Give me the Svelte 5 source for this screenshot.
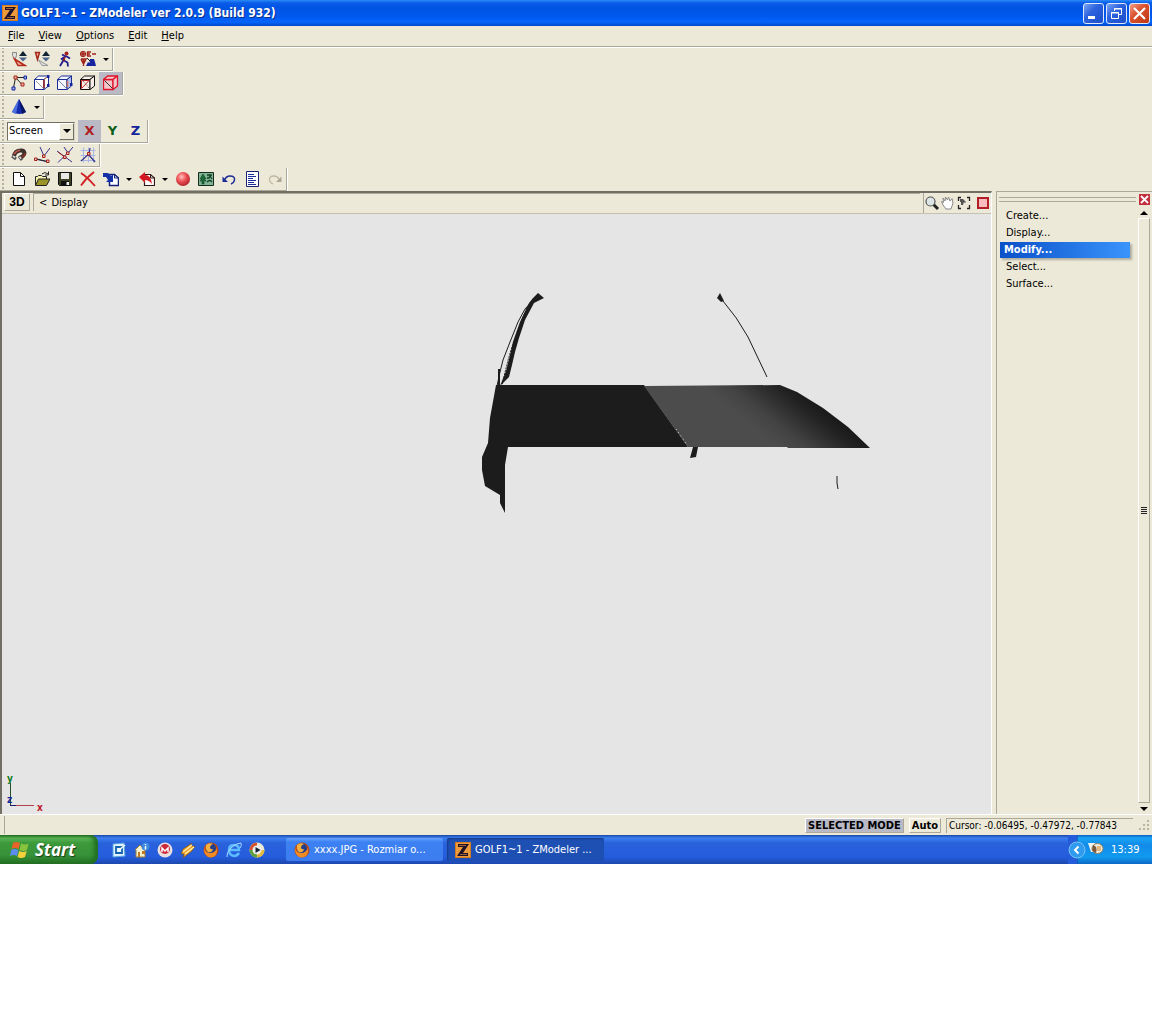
<script lang="ts">
  type Tool = { icon: string; label: string; active?: boolean; menu?: boolean };

  // 16x16 icon bodies, keyed by name
  const icons: Record<string, string> = {
    localAxes: `<path d="M1.5 1.5h4v3l-1 3h-1l-2-3z" fill="#ddd" stroke="#888"/><path d="M3.5 8 14 14.500H7z" fill="#f6b09a" stroke="#b32a1c" stroke-width="1.500"/><path d="M12 0 8 5h8z" fill="#123"/><path d="M8 6.500h8L12 10.500z" fill="#49648c"/>`,
    viewAxes: `<path d="M1.500 1.500h4l-2 7z" fill="#f6b09a" stroke="#a3281c" stroke-width="1.500"/><path d="M4.500 9 14 14.500H8z" fill="#ddd" stroke="#999"/><path d="M12 0 8 5h8z" fill="#123"/><path d="M8 6.500h8L12 10.500z" fill="#49648c"/>`,
    actor: `<path d="M8 4.500 6 10l-3 5M7 9.500l3.500 2 .5 4M8 5.500 4 8.500M9 5l4 2.500M5 3.500l4 2" fill="none" stroke="#231c8c" stroke-width="1.800"/><circle cx="9.500" cy="2.500" r="2" fill="#a3221c"/><path d="m8 6-1.500 4" stroke="#a3221c" stroke-width="1.500"/>`,
    scene: `<circle cx="3" cy="3" r="2.500" fill="none" stroke="#a3221c" stroke-width="1.200"/><path d="M1 3h4M3 1v4M7 1h4M7 3h3M7 5h4M7.500 1v4M12 3h4M1 8h5l-2.500 5L1 8M3.500 8v7" fill="none" stroke="#a3221c" stroke-width="1.500"/><path d="m6 15 2-4 1.500 1L10 8h4l1 3 1 4z" fill="#1724a0"/><path d="m7 7 3 3" stroke="#222"/>`,
    vertices: `<path d="M2.500 13 4.500 2.500H14M5 3l6 6.500" fill="none" stroke="#222"/><g fill="#f5b49c" stroke="#a3221c"><path d="M3 1h3v3H3zM10 8h3v3h-3z"/></g><g fill="#9db4f5" stroke="#1724a0"><path d="M1 12h3v3H1zM13 1h2.500v3H13z"/></g>`,
    edges: `<g fill="#fff" stroke="#1b2c94" stroke-linejoin="round"><path d="M.5 4.500h9.500v10H.5z"/><path d="m.5 4.500 4-3.500h10L10 4.500z"/><path d="m10 4.500 4.500-3.500v10L10 14.500z"/></g><path d="m2 6 7 7" stroke="#999"/><path d="M10 5v8" stroke="#a3221c" stroke-width="1.500"/><path d="M10 4.500 14 1.500" stroke="#d08060"/><path d="M13 9h2.500v3H13zM13 0h2.500v3H13z" fill="#1724a0"/>`,
    faces: `<g fill="#f4f6ff" stroke="#1b2c94" stroke-linejoin="round"><path d="M.5 4.500h9.500v10H.5z"/><path d="m.5 4.500 4-3.500h10L10 4.500z"/><path d="m10 4.500 4.500-3.500v10L10 14.500z" fill="#b4c2f2"/></g><path d="m1 5 9 9" stroke="#78a"/><path d="M10.500 6v6" stroke="#c8765c" stroke-width="1.500"/><path d="M13 8h2.500v3H13z" fill="#1724a0"/>`,
    polygons: `<g fill="#f9efe8" stroke="#111" stroke-linejoin="round"><path d="M.5 4.500h9.500v10H.5z"/><path d="m.5 4.500 4-3.500h10L10 4.500z"/><path d="m10 4.500 4.500-3.500v10L10 14.500z"/></g><path d="M1.500 13.500V5.500H9z" fill="none" stroke="#c12229"/><path d="m3 6 6 7" stroke="#555" stroke-dasharray="1 1"/>`,
    objects: `<g fill="#f3c6cb" stroke="#e0152b" stroke-width="1.300" stroke-linejoin="round"><path d="M.5 4.500h9.500v10H.5z"/><path d="m.5 4.500 4-3.500h10L10 4.500z"/><path d="m10 4.500 4.500-3.500v10L10 14.500z"/></g><path d="m1.500 5.500 8 8" stroke="#333"/>`,
    cone: `<path d="m8 0 7 13q-6 4-14 0z" fill="#152bb0"/><path d="M8 0 1 13q2 1.500 4 2z" fill="#4d71dc"/><path d="m8 0 7 13-4 2z" fill="#081662"/>`,
    magnet: `<path d="M3 9q1-5 6-5.500 4-.5 4.500 2.500-.5 3-4.500 5" fill="none" stroke="#3d3130" stroke-width="4"/><path d="M3 7q2-3 6-4" fill="none" stroke="#c3584a" stroke-width="1.800"/><path d="m1 9 4 3M8 9l3 4" stroke="#555" stroke-width="3"/><path d="m2 9 2 1.500M8.500 10l1.500 1.500" stroke="#eee" stroke-width="1.500"/><path d="M14 6q0 3-3 4" fill="none" stroke="#902d22" stroke-width="1.500"/>`,
    snapVertex: `<path d="m6 0 4 9M16 1l-6 8M1 12l14 3" stroke="#37318c"/><path d="m3 12 10 2.500" stroke="#222"/><g fill="#f5c9b8" stroke="#a3221c"><path d="M8.500 8h2.500v2.500H8.500zM.5 11H3v2.500H.5zM12.500 13H15v2.500h-2.500z"/></g>`,
    snapEdge: `<path d="m7 0 4 6 5-6M0 4l15 11M1 15.500l11-11" fill="none" stroke="#37318c"/><path d="m1 5 8 6" stroke="#a3221c"/><g fill="#f5c9b8" stroke="#a3221c"><path d="M9.500 5H12v2.500H9.500zM6.500 9H9v2.500H6.500z"/></g>`,
    snapGrid: `<path d="M.5 3.500h15M.5 8.500h15M.5 13.500h15M3.500.5v15M8.500.5v15M13.500.5v15" stroke="#a9b6e4"/><path d="m10 1-1 6-8 7M8 7l7 8M9 6" fill="none" stroke="#37318c" stroke-width="1.200"/><path d="M7.500 5.500H10V8H7.500z" fill="#f5c9b8" stroke="#a3221c"/>`,
    newFile: `<path d="M2.500 1.500h7l4 4v9h-11z" fill="#fff" stroke="#111"/><path d="M9.500 1.500v4h4" fill="none" stroke="#111"/>`,
    open: `<path d="M1.500 14V5.500h2l1-1h3l1 1h4V8" fill="#f5efb0" stroke="#222"/><path d="m1.500 14.500 3-6.500H16l-3.500 6.500z" fill="#9a9429" stroke="#222"/><path d="M8 3q3-3 6 0M14.500.5v3.500H11" fill="none" stroke="#222"/>`,
    save: `<path d="M1.500 1.500h13v13h-12l-1-1z" fill="#3d4226" stroke="#111"/><path d="M4 2h8v6H4z" fill="#e8e8e4"/><path d="M4 10h8v5H4z" fill="#111"/><path d="M9.500 11H12v3H9.500z" fill="#eee"/>`,
    remove: `<path d="M1 2q6 4 14 13M14 1Q6 7 1 14.500" fill="none" stroke="#d11f22" stroke-width="1.800"/>`,
    importFile: `<path d="M6.500 3.500h5l4 3.500v7.500h-9z" fill="#fff" stroke="#16207c" stroke-width="1.500"/><path d="M11.500 3v4H16" fill="none" stroke="#16207c"/><path d="M0 2h5l3 3 2-2v8H3l2-2-2-3H0z" fill="#1230a8"/>`,
    exportFile: `<path d="M5.500 3.500h6l4 3.500v7.500h-10z" fill="#fff" stroke="#331515" stroke-width="1.200"/><path d="M11.500 3v4H16" fill="none" stroke="#331515"/><path d="m0 6 6-5v3q6 0 7 9-3-4-7-4v3z" fill="#d21820"/>`,
    material: `<circle cx="8" cy="8" r="7" fill="url(#ball)"/>`,
    texture: `<path d="M.5 1.500h15v13H.5z" fill="#7fb392" stroke="#162b20"/><path d="m5 3 3 5H6l2 2H6v3H4v-3H2l2-2H2z" fill="#1b6a38" stroke="#0d3a20" stroke-width=".5"/><path d="M9 4h5M9 7h2l1-2 2 3M9 11q3-3 5 0" fill="none" stroke="#143f26" stroke-width="1.300"/>`,
    undo: `<path d="M3 10q2-5 6-5 5 0 4.500 4-.5 3-3.500 4" fill="none" stroke="#1b2c94" stroke-width="1.500"/><path d="M1.500 5.500V11H7z" fill="#1b2c94"/>`,
    log: `<path d="M2.500.5h12v15h-12z" fill="#fff" stroke="#1b2474"/><path d="M4 3.500h6M4 5.500h8M4 7.500h5M4 9.500h8M4 11.500h6M4 13.500h8" stroke="#1a2f9c"/>`,
    redo: `<path d="M13 10q-2-5-6-5-5 0-4.500 4 .5 3 3.500 4" fill="none" stroke="#bdb9a6" stroke-width="1.300"/><path d="M14.500 5.500V11H9z" fill="#aaa796"/>`,
    zoom: `<path d="m9 9 5 5" stroke="#222" stroke-width="3"/><circle cx="6.500" cy="6.500" r="4.500" fill="#dce4e6" stroke="#555" stroke-width="1.200"/>`,
    pan: `<path d="M3 10 1.500 6.500l2 1L3 3l2 3 .5-4L7.500 5l1-3L10 6l2-2.500L13 8l-2 6H6z" fill="#fff" stroke="#888"/>`,
    fit: `<path d="M2.500 6V2.500H5M11 2.500h2.500V6M13.500 10v3.500H11M5 13.500H2.500V10" fill="none" stroke="#222" stroke-width="1.300"/><path d="M4 4h3l3 3-1 1-1-1-1 3H5V7H4z" fill="#555"/>`,
    maximize: `<path d="M3 3h10v10H3z" fill="#f8bcbc" stroke="#b31e26" stroke-width="2"/>`,
    z: `<path d="M0 0h16v16H0z" fill="#d27b22"/><path d="M1 1h14v14H1z" fill="#ec9a3c"/><path d="M3 2h11L8 11h5v3H2l6-9H3z" fill="#201327"/><path d="M4 3.500h7M5 12.500h7" stroke="#a0623c"/>`,
    firefox: `<circle cx="8" cy="8" r="7.500" fill="#b84912"/><circle cx="8" cy="6.500" r="5" fill="#243f8a"/><path d="M1 4q0 7 6 7 5 0 7-5 1 9-6 9.500Q0 15 1 4" fill="#f08a24"/><path d="M3 3q3-3 7-1-3 1-3 4 1 2 3 1-1 4-5 3Q2 8 3 3" fill="#f5b040"/>`,
    outlook: `<path d="m2 2 11-1 1 13-12 1z" fill="#dff1ff" stroke="#59a6e0"/><path d="M5 5h6v6H5z" fill="none" stroke="#1463b0" stroke-width="1.800"/><path d="m7 9 7-6" stroke="#fff" stroke-width="1.500"/>`,
    house: `<path d="M1 8 6 3l5 5v7H2V8" fill="#f5efcc" stroke="#a07e3c"/><path d="M4 10h2v5H4zM8 9h3v3H8z" fill="#c5791e"/><circle cx="11.500" cy="4.500" r="4" fill="#3f8ae0"/><path d="M11.500 2v1M11.500 4v3.500" stroke="#fff" stroke-width="1.500"/>`,
    messenger: `<circle cx="8" cy="8" r="7.500" fill="#eadfe0"/><circle cx="8" cy="7" r="5" fill="#ce2938"/><path d="M5 10V6l3 3 3-3v4" fill="none" stroke="#fff" stroke-width="1.500"/>`,
    winamp: `<path d="M12 1 3 7l-2 5h3l-1 4 9-7 3-5h-4z" fill="#ef9c20" stroke="#5c4a2c" stroke-width=".6"/><path d="m3 10 9-7M5 12l9-7" stroke="#fff2b0" stroke-width="1.300"/>`,
    explorer: `<path d="M13 11q-2 3-5 3-5-1-5-6t5-5q5 0 5 5H4" fill="none" stroke="#5dbcff" stroke-width="2.500"/><path d="M1 15q-1-4 4-9t10-5q1 3-1 5" fill="none" stroke="#a5dcff"/>`,
    player: `<circle cx="8" cy="8" r="7.500" fill="#ece7d4"/><path d="M8 8V.5A7.500 7.500 0 0 0 .5 8z" fill="#d6522d"/><path d="M8 8H.5A7.500 7.500 0 0 0 8 15.500z" fill="#5d9d3d"/><path d="M8 8v7.500A7.500 7.500 0 0 0 15.500 8z" fill="#e2bb3c"/><circle cx="8" cy="8" r="4.500" fill="#eee"/><path d="m6.500 5 5 3-5 3z" fill="#123"/>`,
    tray: `<path d="M0 1h7v9H3z" fill="#f4f4ee"/><ellipse cx="9.500" cy="6.500" rx="5.500" ry="5" fill="#f0ece0" stroke="#967d54"/><path d="M5 3q5 1 3 8-3-1-4-3z" fill="#7c5a3e"/><path d="M9 4h4v5H9z" fill="#e3b87e"/>`,
  };

  const menus = ['File', 'View', 'Options', 'Edit', 'Help'];

  const viewTools: Tool[] = [
    { icon: 'localAxes', label: 'Local axes' },
    { icon: 'viewAxes', label: 'View axes' },
    { icon: 'actor', label: 'Actor' },
    { icon: 'scene', label: 'Scene', menu: true },
  ];
  const levelTools: Tool[] = [
    { icon: 'vertices', label: 'Vertices level' },
    { icon: 'edges', label: 'Edges level' },
    { icon: 'faces', label: 'Faces level' },
    { icon: 'polygons', label: 'Polygons level' },
    { icon: 'objects', label: 'Objects level', active: true },
  ];
  const shapeTools: Tool[] = [{ icon: 'cone', label: 'Cone', menu: true }];
  const snapTools: Tool[] = [
    { icon: 'magnet', label: 'Snap' },
    { icon: 'snapVertex', label: 'Snap to vertices' },
    { icon: 'snapEdge', label: 'Snap to edges' },
    { icon: 'snapGrid', label: 'Snap to grid' },
  ];
  const fileTools: Tool[] = [
    { icon: 'newFile', label: 'New' },
    { icon: 'open', label: 'Open' },
    { icon: 'save', label: 'Save' },
    { icon: 'remove', label: 'Delete' },
    { icon: 'importFile', label: 'Import', menu: true },
    { icon: 'exportFile', label: 'Export', menu: true },
    { icon: 'material', label: 'Materials' },
    { icon: 'texture', label: 'Textures' },
    { icon: 'undo', label: 'Undo' },
    { icon: 'log', label: 'Log' },
    { icon: 'redo', label: 'Redo' },
  ];
  const cameraTools: Tool[] = [
    { icon: 'zoom', label: 'Zoom' },
    { icon: 'pan', label: 'Pan' },
    { icon: 'fit', label: 'Fit' },
    { icon: 'maximize', label: 'Maximize view' },
  ];

  const commands = ['Create...', 'Display...', 'Modify...', 'Select...', 'Surface...'];
  const quickLaunch = ['outlook', 'house', 'messenger', 'winamp', 'firefox', 'explorer', 'player'];

  let axis = $state('X');
  let command = $state('Modify...');
</script>

{#snippet icon(name: string)}
  <svg class="icon" viewBox="0 0 16 16" aria-hidden="true">{@html icons[name]}</svg>
{/snippet}

{#snippet tools(items: Tool[])}
  {#each items as tool}
    <button class="tool" class:active={tool.active} aria-label={tool.label}>
      {@render icon(tool.icon)}
    </button>
    {#if tool.menu}
      <button class="more" aria-label="{tool.label} options"><span class="caret"></span></button>
    {/if}
  {/each}
{/snippet}

<svg class="defs" aria-hidden="true">
  <defs>
    <radialGradient id="ball" cx=".4" cy=".35" r=".65">
      <stop offset="0" stop-color="#ffc4c0" />
      <stop offset=".5" stop-color="#ee5357" />
      <stop offset="1" stop-color="#b3262d" />
    </radialGradient>
  </defs>
</svg>

<div class="desktop">
  <header class="titlebar">
    {@render icon('z')}
    <h1>GOLF1~1 - ZModeler ver 2.0.9 (Build 932)</h1>
    <button class="win" aria-label="Minimize">
      <svg viewBox="0 0 19 19"><path d="M4 12h7v3H4z" fill="#fff" /></svg>
    </button>
    <button class="win" aria-label="Restore">
      <svg viewBox="0 0 19 19" fill="none" stroke="#fff">
        <path d="M7.500 7V4.500h7v6H12M7 5h8M4.500 8.500h7v6h-7zM4 9h8" />
      </svg>
    </button>
    <button class="win close" aria-label="Close">
      <svg viewBox="0 0 19 19"><path d="m4 4 11 11M15 4 4 15" stroke="#fff" stroke-width="2.200" /></svg>
    </button>
  </header>

  <nav class="menubar">
    {#each menus as menu}
      <button><u>{menu[0]}</u>{menu.slice(1)}</button>
    {/each}
  </nav>

  <div class="toolbars">
    <div class="toolbar">{@render tools(viewTools)}</div>
    <div class="toolbar">{@render tools(levelTools)}</div>
    <div class="toolbar">{@render tools(shapeTools)}</div>
    <div class="toolbar">
      <label class="space">
        <select aria-label="Coordinate space">
          <option>Screen</option>
          <option>Local</option>
          <option>World</option>
        </select>
        <span class="drop"><span class="caret wide"></span></span>
      </label>
      {#each ['X', 'Y', 'Z'] as name}
        <button class="tool axis {name}" class:active={axis === name} onclick={() => (axis = name)}>{name}</button>
      {/each}
    </div>
    <div class="toolbar">{@render tools(snapTools)}</div>
    <div class="toolbar">{@render tools(fileTools)}</div>
  </div>

  <main class="workspace">
    <section class="view">
      <div class="viewbar">
        <button class="mode">3D</button>
        <button class="path"><span>&lt;</span> Display</button>
        <div class="camera">
          {#each cameraTools as tool}
            <button aria-label={tool.label}>{@render icon(tool.icon)}</button>
          {/each}
        </div>
      </div>
      <svg class="scene" role="img" aria-label="Car body model">
        <defs>
          <linearGradient id="roof" gradientUnits="userSpaceOnUse" x1="745" y1="208" x2="781" y2="163">
            <stop offset="0" stop-color="#4c4c4c" />
            <stop offset=".3" stop-color="#434343" />
            <stop offset=".8" stop-color="#232323" />
            <stop offset="1" stop-color="#1a1a1a" />
          </linearGradient>
        </defs>
        <g fill="#1c1c1c">
          <!-- left pillar and side panel -->
          <path d="m536 79 6 5-10 5-9 17-6 18-4 14-3 13-3 12-9 9 6-15 4-16 3-13 7-20 9-19 4-5z" />
          <path d="M494 171h148l44 62H506l-3 18v48l-5-10v-8l-15-9-3-16v-13l6-14 2-25z" />
          <path d="M691 233h5l-2 10-6 1z" />
          <path d="m718 79 4 8-3 1-4-4z" />
        </g>
        <path d="m642 172 136-1 17 7 26 16 25 19 22 21h-82l-1-1H686z" fill="url(#roof)" />
        <path d="m674 215 10 14" stroke="#ccc" stroke-dasharray="1 3" />
        <g fill="none" stroke="#1c1c1c">
          <path d="m532 85-9 10-7 13-8 20-7 18-3 12-3 14" />
          <path d="M525 94q-16 34-25 78" stroke-dasharray="2 1" />
          <path d="M497 155v17" stroke-width="2" />
          <path d="M721 87q14 16 25 36l19 40M835 262v7l1 6" />
        </g>
        <svg y="100%" overflow="visible">
          <path d="M8.500-31v23" stroke="#26502c" />
          <path d="M8-8.500h12" stroke="#1b1b70" />
          <path d="M14-8.500h18" stroke="#b3404c" />
          <g class="axes">
            <text x="5" y="-32" fill="#0d7a1b">y</text>
            <text x="5" y="-11" fill="#16249a">z</text>
            <text x="35" y="-3" fill="#c0182c">x</text>
          </g>
        </svg>
      </svg>
    </section>

    <aside class="side">
      <div class="dock">
        <span class="grip"></span>
        <button aria-label="Close panel">
          <svg viewBox="0 0 11 11"><path d="m2 2 7 7M9 2 2 9" stroke="#fff" stroke-width="1.800" /></svg>
        </button>
      </div>
      <div class="panel">
        <ul>
          {#each commands as name}
            <li><button class:chosen={command === name} onclick={() => (command = name)}>{name}</button></li>
          {/each}
        </ul>
        <div class="scroll">
          <button aria-label="Scroll up"><span class="caret wide up"></span></button>
          <span class="thumb"></span>
          <button aria-label="Scroll down"><span class="caret wide"></span></button>
        </div>
      </div>
    </aside>
  </main>

  <div class="status">
    <span class="message"></span>
    <button class="flag lit">SELECTED MODE</button>
    <button class="flag">Auto</button>
    <output>Cursor: -0.06495, -0.47972, -0.77843</output>
    <svg class="resize" viewBox="0 0 12 12">
      <path d="M9 1h2v2H9zM5 5h2v2H5zM9 5h2v2H9zM1 9h2v2H1zM5 9h2v2H5zM9 9h2v2H9z" fill="#b8b4a2" />
    </svg>
  </div>

  <footer class="taskbar">
    <button class="start">
      <svg viewBox="0 0 20 18">
        <path d="M3 2q3-2 7 0L8.500 8Q5 6 1.500 8z" fill="#e8622a" />
        <path d="M11 2.500q4 2 7.500 0L17 9q-4 2-7.500 0z" fill="#8ac43c" />
        <path d="M1.200 9q3.500-2 7 0L7 15Q3.500 13 0 15z" fill="#5b8cf0" />
        <path d="M9.200 10q4 2 7.500 0L15 16q-4 2-7.500 0z" fill="#f6cf3a" />
      </svg>
      Start
    </button>
    <div class="quick">
      {#each quickLaunch as name}
        <button aria-label={name}>{@render icon(name)}</button>
      {/each}
    </div>
    <button class="task">{@render icon('firefox')}<span>xxxx.JPG - Rozmiar o...</span></button>
    <button class="task current">{@render icon('z')}<span>GOLF1~1 - ZModeler ...</span></button>
    <div class="tray">
      <button class="expand" aria-label="Show hidden icons">
        <svg viewBox="0 0 18 18">
          <circle cx="9" cy="9" r="8" fill="#2f9bee" stroke="#7cc0f8" />
          <path d="M10.500 5.500 7 9l3.500 3.500" fill="none" stroke="#fff" stroke-width="2" />
        </svg>
      </button>
      {@render icon('tray')}
      <time>13:39</time>
    </div>
  </footer>
</div>

<style>
  :global(body) {
    margin: 0;
    background: #fff;
  }

  .desktop {
    font: 11px/14px Tahoma, 'DejaVu Sans Condensed', sans-serif;
    color: #000;
    background: #ece9d8;
  }

  button {
    margin: 0;
    padding: 0;
    border: 0;
    background: none;
    font: inherit;
    color: inherit;
    white-space: nowrap;
  }

  .defs {
    display: block;
    width: 0;
    height: 0;
  }

  .icon {
    display: block;
    flex: none;
    width: 16px;
    height: 16px;
  }

  /* Title bar */
  .titlebar {
    display: flex;
    align-items: center;
    gap: 2px;
    height: 26px;
    padding: 0 2px;
    background: linear-gradient(#2a8bf5 0, #0a5ce8 3px, #0054e3 8px, #0058ee 16px, #0465fc 22px, #0347c8 26px);
  }

  h1 {
    flex: 1;
    margin: 0 0 0 1px;
    font: bold 12px/16px 'Trebuchet MS', 'DejaVu Sans Condensed', sans-serif;
    color: #fff;
    text-shadow: 1px 1px #0a2f8c;
  }

  .win {
    width: 21px;
    height: 21px;
    border: 1px solid #dfe9fb;
    border-radius: 3px;
    background: linear-gradient(135deg, #7ba5f3, #2d62de 40%, #1c4fc8);
  }

  .win svg {
    display: block;
  }

  .win.close {
    background: linear-gradient(135deg, #f0a088, #dc5330 40%, #bd3511);
  }

  /* Menus and toolbars */
  .menubar {
    display: flex;
    gap: 14px;
    height: 20px;
    padding-left: 8px;
    border-bottom: 1px solid #aca899;
  }

  .toolbars {
    display: flex;
    flex-direction: column;
    align-items: flex-start;
    gap: 1px;
    border-top: 1px solid #fff;
  }

  .toolbar {
    display: flex;
    align-items: center;
    height: 22px;
    padding-left: 7px;
    border: solid #aca899;
    border-width: 0 1px 1px 0;
    box-shadow: 0 1px #fff, 1px 0 #fff;
    background: radial-gradient(circle at 2px 2px, #b5b19e 1px, transparent 1px) 1px 2px / 4px 4px repeat-y;
  }

  .tool {
    display: grid;
    place-items: center;
    width: 23px;
    height: 22px;
  }

  .tool.active {
    background: #b9bac6;
  }

  .more {
    display: grid;
    place-items: center;
    width: 13px;
    height: 22px;
  }

  .caret {
    border: 3px solid transparent;
    border-top-color: #000;
    border-bottom-width: 0;
  }

  .caret.wide {
    border-width: 4px 4px 0;
  }

  .caret.up {
    border: 4px solid transparent;
    border-top-width: 0;
    border-bottom-color: #000;
  }

  .space {
    display: grid;
    grid-template-columns: 51px 15px;
    margin-right: 3px;
    border: 1px solid #716f64;
    border-right-color: #d8d4c4;
    border-bottom-color: #d8d4c4;
    background: #fff;
  }

  .space select {
    appearance: none;
    grid-area: 1 / 1 / 2 / 3;
    height: 17px;
    padding: 0 0 0 1px;
    border: 0;
    background: none;
    font: inherit;
    color: inherit;
  }

  .drop {
    grid-area: 1 / 2;
    display: grid;
    place-items: center;
    border: 1px solid #fff;
    border-right-color: #716f64;
    border-bottom-color: #716f64;
    background: #ece9d8;
    pointer-events: none;
  }

  .axis {
    font: bold 13px/16px Verdana, 'DejaVu Sans', sans-serif;
    color: #16249a;
  }

  .axis.X {
    color: #b01c20;
  }

  .axis.Y {
    color: #0d5e18;
  }

  /* Viewport */
  .workspace {
    display: flex;
    gap: 4px;
  }

  .view {
    flex: 1;
    min-width: 0;
    border: solid #716f64;
    border-width: 2px 0 0 2px;
    border-right: 1px solid #fff;
  }

  .viewbar {
    display: flex;
    gap: 3px;
    height: 20px;
    padding-left: 2px;
    border-bottom: 1px solid #c6c2b2;
  }

  .mode {
    width: 26px;
    height: 18px;
    border: 1px solid #fff;
    border-right-color: #aca899;
    border-bottom-color: #aca899;
    font: bold 12px/14px 'Liberation Sans', sans-serif;
  }

  .path {
    flex: 1;
    height: 18px;
    padding-left: 5px;
    border-left: 1px solid #aca899;
    border-top: 1px solid #aca899;
    text-align: left;
  }

  .path span {
    margin-right: 1px;
  }

  .camera {
    display: flex;
    align-items: center;
    border-left: 1px solid #aca899;
  }

  .camera button:last-child {
    margin-left: 3px;
  }

  .scene {
    display: block;
    width: 100%;
    height: 600px;
    background: #e5e5e5;
  }

  .axes {
    font: bold 10px 'DejaVu Sans Condensed', sans-serif;
  }

  /* Side panel */
  .side {
    display: flex;
    flex-direction: column;
    width: 155px;
    border-left: 1px solid #aca899;
    border-top: 1px solid #aca899;
  }

  .dock {
    display: flex;
    align-items: center;
    gap: 3px;
    height: 15px;
    padding: 0 2px;
  }

  .grip {
    flex: 1;
    height: 3px;
    border: solid #aca899;
    border-width: 1px 0;
  }

  .dock button {
    width: 11px;
    height: 11px;
    background: #c22f3c;
  }

  .dock svg {
    display: block;
  }

  .panel {
    flex: 1;
    display: flex;
    gap: 8px;
    padding: 0 2px 0 3px;
  }

  ul {
    flex: 1;
    margin: 0;
    padding: 1px 0 0;
    list-style: none;
  }

  li {
    height: 17px;
  }

  li button {
    display: block;
    width: 100%;
    height: 16px;
    padding-left: 6px;
    text-align: left;
  }

  li .chosen {
    padding-left: 4px;
    background: linear-gradient(90deg, #0a50c8, #3a94fc);
    box-shadow: 2px 2px 2px #b0ad9e;
    font-weight: bold;
    color: #fff;
  }

  .scroll {
    display: flex;
    flex-direction: column;
    width: 12px;
  }

  .scroll button {
    display: grid;
    place-items: center;
    height: 11px;
  }

  .thumb {
    flex: 1;
    border: 1px solid #fff;
    border-right-color: #aca899;
    border-bottom-color: #aca899;
    background: repeating-linear-gradient(#222 0, #222 1px, transparent 1px, transparent 2px) center / 6px 8px no-repeat;
  }

  /* Status bar */
  .status {
    display: flex;
    align-items: center;
    gap: 5px;
    height: 18px;
    padding: 1px 2px 1px 4px;
    border-top: 1px solid #fff;
  }

  .message {
    flex: 1;
    align-self: stretch;
    border-left: 1px solid #aca899;
  }

  .flag {
    height: 15px;
    padding: 0 2px;
    border: 1px solid #fff;
    border-right-color: #aca899;
    border-bottom-color: #aca899;
    font-weight: bold;
    line-height: 13px;
  }

  .flag.lit {
    background: #b9bac6;
  }

  output {
    width: 184px;
    padding-left: 2px;
    border-left: 1px solid #aca899;
    border-top: 1px solid #aca899;
    font-size: 10px;
  }

  .resize {
    width: 12px;
    height: 12px;
  }

  /* Taskbar */
  .taskbar {
    display: flex;
    align-items: center;
    height: 29px;
    background: linear-gradient(#1c47a4 0, #3a7ff0 3px, #2a62dc 8px, #245cdc 22px, #1d48ad 29px);
    color: #fff;
  }

  .start {
    display: flex;
    align-items: center;
    gap: 5px;
    width: 98px;
    height: 29px;
    padding-left: 10px;
    border-radius: 0 8px 8px 0;
    background: linear-gradient(#256d24 0, #5bb558 3px, #3c9a3a 8px, #37923a 20px, #226f22 29px);
    box-shadow: inset -4px 0 4px #226f22;
    font: italic bold 17px/20px 'Franklin Gothic Medium', 'Open Sans', sans-serif;
    text-shadow: 1px 1px 1px #1a401a;
  }

  .start svg {
    width: 20px;
    height: 18px;
  }

  .quick {
    display: flex;
    gap: 7px;
    width: 175px;
    padding-left: 13px;
  }

  .task {
    display: flex;
    align-items: center;
    gap: 4px;
    width: 157px;
    height: 23px;
    margin-right: 4px;
    padding-left: 8px;
    border-radius: 2px;
    background: linear-gradient(#6aa5fa, #3c81f3 4px, #3c7cee);
  }

  .task.current {
    background: #1e50b4;
    box-shadow: inset 1px 1px 2px #143a88;
  }

  .tray {
    display: flex;
    align-items: center;
    gap: 2px;
    width: 84px;
    height: 29px;
    margin-left: auto;
    background: linear-gradient(90deg, transparent 9px, #0d3f9c 9px, transparent 10px),
      linear-gradient(90deg, #245cdc 9px, transparent 9px),
      linear-gradient(#0d5ec0 0, #1aa4f5 3px, #128be8 10px, #109aef 22px, #0d68c4 29px);
  }

  .expand {
    width: 18px;
    height: 18px;
  }

  .tray time {
    margin-left: 5px;
  }
</style>
